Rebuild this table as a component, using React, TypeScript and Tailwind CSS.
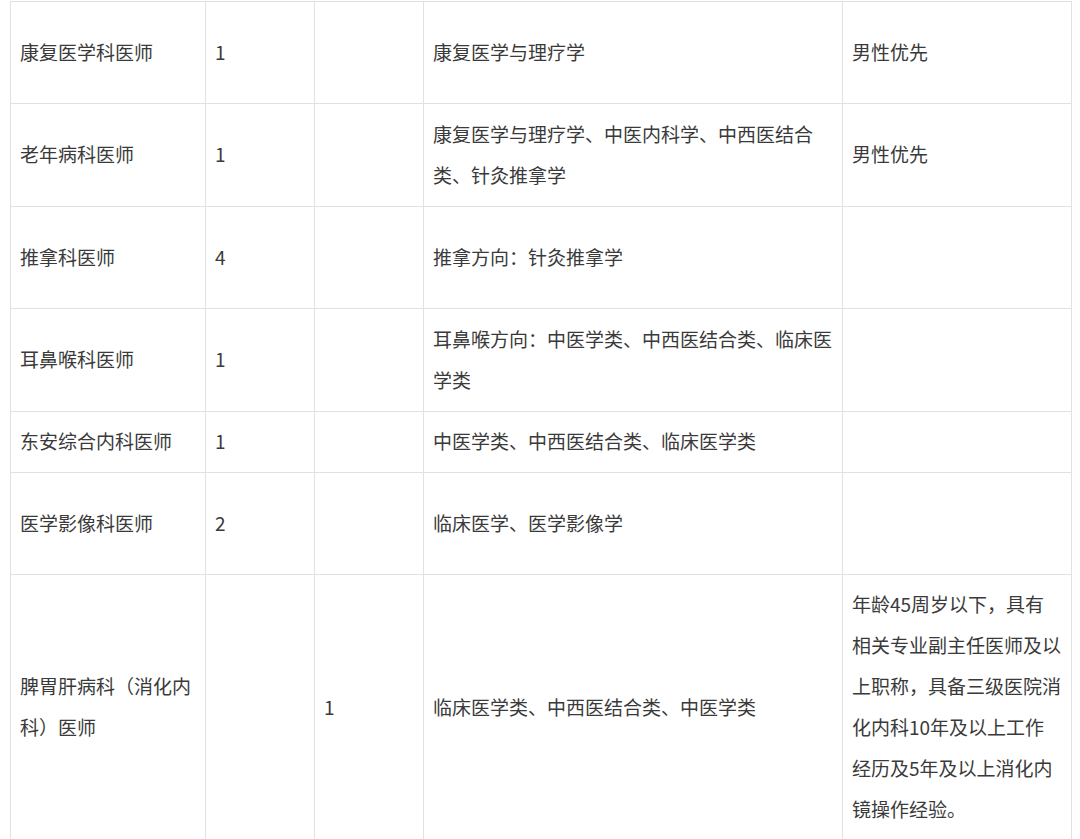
const rows: { post: string; a: string; b: string; major: string; note: string; h: string }[] = [
  { post: "康复医学科医师", a: "1", b: "", major: "康复医学与理疗学", note: "男性优先", h: "h-[102px]" },
  {
    post: "老年病科医师",
    a: "1",
    b: "",
    major: "康复医学与理疗学、中医内科学、中西医结合类、针灸推拿学",
    note: "男性优先",
    h: "h-[103px]",
  },
  { post: "推拿科医师", a: "4", b: "", major: "推拿方向：针灸推拿学", note: "", h: "h-[102px]" },
  {
    post: "耳鼻喉科医师",
    a: "1",
    b: "",
    major: "耳鼻喉方向：中医学类、中西医结合类、临床医学类",
    note: "",
    h: "h-[103px]",
  },
  { post: "东安综合内科医师", a: "1", b: "", major: "中医学类、中西医结合类、临床医学类", note: "", h: "h-[61px]" },
  { post: "医学影像科医师", a: "2", b: "", major: "临床医学、医学影像学", note: "", h: "h-[102px]" },
  {
    post: "脾胃肝病科（消化内科）医师",
    a: "",
    b: "1",
    major: "临床医学类、中西医结合类、中医学类",
    note: "年龄45周岁以下，具有相关专业副主任医师及以上职称，具备三级医院消化内科10年及以上工作经历及5年及以上消化内镜操作经验。",
    h: "",
  },
];

const cell = "border border-[#dfe2e5] px-[9px] pt-[8px] pb-[11px] align-middle";

export default function App() {
  return (
    <div className="min-h-screen bg-white pl-[10px] pt-px font-['Noto_Sans_CJK_SC','Noto_Sans',sans-serif] text-[19px] leading-[41px] text-[#3a3a3a]">
      <table className="w-[1061px] table-fixed border-collapse">
        <colgroup>
          <col className="w-[195px]" />
          <col className="w-[109px]" />
          <col className="w-[109px]" />
          <col className="w-[419px]" />
          <col className="w-[229px]" />
        </colgroup>
        <tbody>
          {rows.map((r, i) => (
            <tr key={i} className={r.h}>
              <td className={cell}>{r.post}</td>
              <td className={cell}>{r.a}</td>
              <td className={cell}>{r.b}</td>
              <td className={cell}>{r.major}</td>
              <td className={cell}>{r.note}</td>
            </tr>
          ))}
        </tbody>
      </table>
    </div>
  );
}
